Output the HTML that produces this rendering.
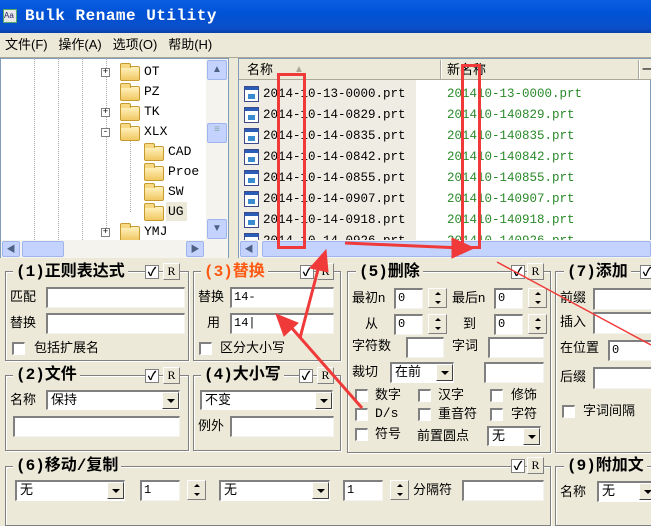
<!DOCTYPE html>
<html><head><meta charset="utf-8"><style>
*{box-sizing:border-box;margin:0;padding:0}
body{width:651px;height:512px;overflow:hidden;background:#ece9d8;position:relative;font-family:"Liberation Sans","Noto Sans CJK SC",sans-serif;font-size:13px;color:#000}
.a{position:absolute}
.t{position:absolute;white-space:nowrap;line-height:16px}
.in{position:absolute;background:#fff;border-top:2px solid #808080;border-left:2px solid #808080;border-right:1px solid #f4f3ee;border-bottom:1px solid #f4f3ee;font-family:"Liberation Mono",monospace;font-size:12px;line-height:16px;padding-left:2px}
.cb{position:absolute;width:13px;height:13px;background:#fff;border-top:2px solid #808080;border-left:2px solid #808080;border-right:1px solid #fff;border-bottom:1px solid #fff}
.ck{position:absolute;width:14px;height:14px;background:#fff;border:1px solid #808080;font-size:12px;line-height:12px;text-align:center;font-weight:bold}
.R{position:absolute;width:17px;height:17px;background:#ece9d8;border:1px solid #fff;border-right-color:#808080;border-bottom-color:#808080;font-family:"Liberation Serif",serif;font-size:12px;text-align:center;line-height:15px}
.gb{position:absolute;border:1px solid #808080;box-shadow:1px 1px 0 #fff inset,1px 1px 0 #fff}
.gt{position:absolute;background:#ece9d8;font-weight:bold;font-size:16px;line-height:18px;padding:0 3px;white-space:nowrap;font-family:"Liberation Mono","Noto Sans CJK SC",sans-serif}
.dd{position:absolute;background:#fff;border-top:2px solid #808080;border-left:2px solid #808080;border-right:1px solid #fff;border-bottom:1px solid #fff;padding-left:3px;line-height:16px}
.dd b{position:absolute;right:0;top:0;width:17px;height:17px;background:#ece9d8;border:1px solid #fff;border-right-color:#404040;border-bottom-color:#404040}
.dd b:after{content:"";position:absolute;left:4px;top:6px;border-left:4px solid transparent;border-right:4px solid transparent;border-top:4px solid #000}
.sp{position:absolute;width:19px;height:20px;background:#ece9d8;border:1px solid #fff;border-right-color:#808080;border-bottom-color:#808080}
.sp:before{content:"";position:absolute;left:6px;top:3px;border-left:3px solid transparent;border-right:3px solid transparent;border-bottom:3px solid #000}
.sp:after{content:"";position:absolute;left:6px;top:12px;border-left:3px solid transparent;border-right:3px solid transparent;border-top:3px solid #000}
.sb{position:absolute;background:#c3d3fd;border:1px solid #a0b4ee;border-radius:2px}
.fo{position:absolute;width:20px;height:15px;background:linear-gradient(#fff2c0,#f2c862);border:1px solid #c59a2e;border-radius:2px}
.fo:before{content:"";position:absolute;left:-1px;top:-4px;width:9px;height:4px;background:#f7d883;border:1px solid #c59a2e;border-bottom:none;border-radius:2px 2px 0 0}
.pl{position:absolute;width:9px;height:9px;border:1px solid #808080;background:#fff;font-size:9px;line-height:7px;text-align:center;font-family:"Liberation Mono",monospace}
.mono{font-family:"Liberation Mono",monospace;font-size:13px}
.lst{font-family:"Liberation Mono",monospace;font-size:12.5px;white-space:nowrap}
.ic{position:absolute;width:15px;height:16px;background:#fff;border:1px solid #3a4a8a}
.ic:before{content:"";position:absolute;left:0;top:0;width:13px;height:3px;background:#2a5db8}
.ic:after{content:"";position:absolute;left:3px;top:7px;width:7px;height:5px;background:#3a8ad0}
</style></head><body>
<div class="a" style="left:0;top:0;width:651px;height:33px;background:linear-gradient(#0a5fe0,#0052d6 40%,#0b4fc9 85%,#0a3fa8)"></div>
<div class="a" style="left:3px;top:9px;width:14px;height:14px;background:#e8e8e8;border:1px solid #5a6;font-size:8px;line-height:12px;color:#226">Aa</div>
<div class="t" style="left:25px;top:8px;color:#fff;font-weight:bold;font-size:16px;font-family:'Liberation Mono',monospace;letter-spacing:0.5px">Bulk Rename Utility</div>
<div class="t" style="left:5px;top:37px;font-size:13px">文件(F)&nbsp;&nbsp;&nbsp;操作(A)&nbsp;&nbsp;&nbsp;选项(O)&nbsp;&nbsp;&nbsp;帮助(H)</div>
<div class="a" style="left:0;top:57px;width:651px;height:1px;background:#aca899"></div>
<div class="a" style="left:0;top:58px;width:229px;height:200px;background:#fff;border:1px solid #7f9db9"></div>
<div class="a" style="left:34px;top:58px;height:182px;border-left:1px dotted #aaa"></div>
<div class="a" style="left:58px;top:58px;height:182px;border-left:1px dotted #aaa"></div>
<div class="a" style="left:82px;top:58px;height:182px;border-left:1px dotted #aaa"></div>
<div class="a" style="left:106px;top:58px;height:174px;border-left:1px dotted #aaa"></div>
<div class="a" style="left:130px;top:140px;height:72px;border-left:1px dotted #aaa"></div>
<div class="pl" style="left:101px;top:68px">+</div><div class="fo" style="left:120px;top:66px"></div><div class="t mono" style="left:144px;top:64px">OT</div>
<div class="fo" style="left:120px;top:86px"></div><div class="t mono" style="left:144px;top:84px">PZ</div>
<div class="pl" style="left:101px;top:108px">+</div><div class="fo" style="left:120px;top:106px"></div><div class="t mono" style="left:144px;top:104px">TK</div>
<div class="pl" style="left:101px;top:128px">-</div><div class="fo" style="left:120px;top:126px"></div><div class="t mono" style="left:144px;top:124px">XLX</div>
<div class="fo" style="left:144px;top:146px"></div><div class="t mono" style="left:168px;top:144px">CAD</div>
<div class="fo" style="left:144px;top:166px"></div><div class="t mono" style="left:168px;top:164px">Proe</div>
<div class="fo" style="left:144px;top:186px"></div><div class="t mono" style="left:168px;top:184px">SW</div>
<div class="a" style="left:166px;top:202px;width:21px;height:19px;background:#ece9d8"></div>
<div class="fo" style="left:144px;top:206px"></div><div class="t mono" style="left:168px;top:204px">UG</div>
<div class="pl" style="left:101px;top:228px">+</div><div class="fo" style="left:120px;top:226px"></div><div class="t mono" style="left:144px;top:224px">YMJ</div>
<div class="a" style="left:206px;top:59px;width:22px;height:181px;background:#f4f3ee"></div>
<div class="sb" style="left:207px;top:60px;width:20px;height:20px;text-align:center;font-size:10px;line-height:18px;color:#4d6185">▲</div>
<div class="sb" style="left:207px;top:123px;width:20px;height:20px;text-align:center;font-size:10px;color:#8aa">≡</div>
<div class="sb" style="left:207px;top:219px;width:20px;height:20px;text-align:center;font-size:10px;line-height:18px;color:#4d6185">▼</div>
<div class="a" style="left:1px;top:240px;width:227px;height:18px;background:#f4f3ee"></div>
<div class="sb" style="left:2px;top:241px;width:18px;height:16px;font-size:9px;line-height:14px;text-align:center;color:#4d6185">◀</div>
<div class="sb" style="left:22px;top:241px;width:42px;height:16px"></div>
<div class="sb" style="left:186px;top:241px;width:18px;height:16px;font-size:9px;line-height:14px;text-align:center;color:#4d6185">▶</div>
<div class="a" style="left:238px;top:58px;width:413px;height:200px;background:#fff;border:1px solid #7f9db9;overflow:hidden">
<div class="a" style="left:0;top:21px;width:177px;height:180px;background:#efede3"></div>
<div class="a lst" style="left:5px;top:25px;line-height:21px;width:200px">
<div style="position:relative;height:21px"><span class="ic" style="left:0;top:2px"></span><span style="position:absolute;left:19px">2014-10-13-0000.prt</span></div>
<div style="position:relative;height:21px"><span class="ic" style="left:0;top:2px"></span><span style="position:absolute;left:19px">2014-10-14-0829.prt</span></div>
<div style="position:relative;height:21px"><span class="ic" style="left:0;top:2px"></span><span style="position:absolute;left:19px">2014-10-14-0835.prt</span></div>
<div style="position:relative;height:21px"><span class="ic" style="left:0;top:2px"></span><span style="position:absolute;left:19px">2014-10-14-0842.prt</span></div>
<div style="position:relative;height:21px"><span class="ic" style="left:0;top:2px"></span><span style="position:absolute;left:19px">2014-10-14-0855.prt</span></div>
<div style="position:relative;height:21px"><span class="ic" style="left:0;top:2px"></span><span style="position:absolute;left:19px">2014-10-14-0907.prt</span></div>
<div style="position:relative;height:21px"><span class="ic" style="left:0;top:2px"></span><span style="position:absolute;left:19px">2014-10-14-0918.prt</span></div>
<div style="position:relative;height:21px"><span class="ic" style="left:0;top:2px"></span><span style="position:absolute;left:19px">2014-10-14-0926.prt</span></div>
</div>
<div class="a lst" style="left:208px;top:25px;line-height:21px;color:#2a8a2a;width:200px">
<div>201410-13-0000.prt</div><div>201410-140829.prt</div><div>201410-140835.prt</div><div>201410-140842.prt</div><div>201410-140855.prt</div><div>201410-140907.prt</div><div>201410-140918.prt</div><div>201410-140926.prt</div>
</div>
</div>
<div class="a" style="left:239px;top:59px;width:412px;height:21px;background:#ece9d8;border-bottom:1px solid #aca899"></div>
<div class="a" style="left:440px;top:60px;width:2px;height:19px;border-left:1px solid #aca899;border-right:1px solid #fff"></div>
<div class="a" style="left:638px;top:60px;width:2px;height:19px;border-left:1px solid #aca899;border-right:1px solid #fff"></div>
<div class="t" style="left:247px;top:62px">名称</div>
<div class="t" style="left:294px;top:62px;color:#aca899;font-size:10px">▲</div>
<div class="t" style="left:447px;top:62px">新名称</div>
<div class="t" style="left:642px;top:62px">一</div>
<div class="a" style="left:239px;top:240px;width:412px;height:18px;background:#f4f3ee"></div>
<div class="sb" style="left:240px;top:241px;width:18px;height:16px;font-size:9px;line-height:14px;text-align:center;color:#4d6185">◀</div>
<div class="sb" style="left:262px;top:241px;width:389px;height:16px"></div>
<div class="a" style="left:229px;top:58px;width:9px;height:200px;background:#ece9d8"></div>

<div class="gb" style="left:5px;top:271px;width:184px;height:90px"></div>
<div class="gt" style="left:13px;top:263px">(1)正则表达式</div>
<div class="ck" style="left:145px;top:265px">✓</div><div class="R" style="left:163px;top:263px">R</div>
<div class="t" style="left:10px;top:289px">匹配</div><div class="in" style="left:46px;top:287px;width:139px;height:21px"></div>
<div class="t" style="left:10px;top:315px">替换</div><div class="in" style="left:46px;top:313px;width:139px;height:21px"></div>
<div class="cb" style="left:12px;top:342px"></div><div class="t" style="left:34px;top:340px">包括扩展名</div>

<div class="gb" style="left:193px;top:271px;width:148px;height:90px"></div>
<div class="gt" style="left:201px;top:263px;color:#ff5a14">(3)替换</div>
<div class="ck" style="left:300px;top:265px">✓</div><div class="R" style="left:317px;top:263px">R</div>
<div class="t" style="left:198px;top:289px">替换</div><div class="in" style="left:230px;top:287px;width:104px;height:21px">14-</div>
<div class="t" style="left:207px;top:315px">用</div><div class="in" style="left:230px;top:313px;width:104px;height:21px">14|</div>
<div class="cb" style="left:199px;top:342px"></div><div class="t" style="left:220px;top:340px">区分大小写</div>

<div class="gb" style="left:5px;top:375px;width:184px;height:76px"></div>
<div class="gt" style="left:13px;top:366px">(2)文件</div>
<div class="a" style="left:88px;top:375px;width:55px;height:1px;background:#808080"></div>
<div class="ck" style="left:145px;top:369px">✓</div><div class="R" style="left:163px;top:367px">R</div>
<div class="t" style="left:10px;top:392px">名称</div><div class="dd" style="left:46px;top:390px;width:134px;height:20px">保持<b></b></div>
<div class="in" style="left:13px;top:416px;width:167px;height:21px"></div>

<div class="gb" style="left:193px;top:375px;width:148px;height:76px"></div>
<div class="gt" style="left:201px;top:366px">(4)大小写</div>
<div class="ck" style="left:299px;top:369px">✓</div><div class="R" style="left:317px;top:367px">R</div>
<div class="dd" style="left:200px;top:390px;width:133px;height:20px">不变<b></b></div>
<div class="t" style="left:198px;top:418px">例外</div><div class="in" style="left:230px;top:416px;width:104px;height:21px"></div>

<div class="gb" style="left:347px;top:271px;width:204px;height:182px"></div>
<div class="gt" style="left:356px;top:263px">(5)删除</div>
<div class="ck" style="left:511px;top:265px">✓</div><div class="R" style="left:527px;top:263px">R</div>
<div class="t" style="left:352px;top:290px">最初n</div><div class="in" style="left:394px;top:288px;width:29px;height:21px">0</div><div class="sp" style="left:428px;top:288px"></div>
<div class="t" style="left:452px;top:290px">最后n</div><div class="in" style="left:494px;top:288px;width:29px;height:21px">0</div><div class="sp" style="left:528px;top:288px"></div>
<div class="t" style="left:365px;top:316px">从</div><div class="in" style="left:394px;top:314px;width:29px;height:21px">0</div><div class="sp" style="left:428px;top:314px"></div>
<div class="t" style="left:463px;top:316px">到</div><div class="in" style="left:494px;top:314px;width:29px;height:21px">0</div><div class="sp" style="left:528px;top:314px"></div>
<div class="t" style="left:352px;top:338px">字符数</div><div class="in" style="left:406px;top:337px;width:38px;height:21px"></div>
<div class="t" style="left:452px;top:338px">字词</div><div class="in" style="left:488px;top:337px;width:56px;height:21px"></div>
<div class="t" style="left:352px;top:364px">裁切</div><div class="dd" style="left:390px;top:362px;width:64px;height:21px">在前<b></b></div>
<div class="in" style="left:484px;top:362px;width:60px;height:21px"></div>
<div class="cb" style="left:355px;top:389px"></div><div class="t" style="left:375px;top:387px">数字</div>
<div class="cb" style="left:418px;top:389px"></div><div class="t" style="left:438px;top:387px">汉字</div>
<div class="cb" style="left:490px;top:389px"></div><div class="t" style="left:511px;top:387px">修饰</div>
<div class="cb" style="left:355px;top:408px"></div><div class="t mono" style="left:375px;top:406px">D/s</div>
<div class="cb" style="left:418px;top:408px"></div><div class="t" style="left:438px;top:406px">重音符</div>
<div class="cb" style="left:490px;top:408px"></div><div class="t" style="left:511px;top:406px">字符</div>
<div class="cb" style="left:355px;top:428px"></div><div class="t" style="left:375px;top:426px">符号</div>
<div class="t" style="left:417px;top:428px">前置圆点</div><div class="dd" style="left:487px;top:426px;width:54px;height:20px">无<b></b></div>

<div class="gb" style="left:555px;top:271px;width:100px;height:182px"></div>
<div class="gt" style="left:564px;top:263px">(7)添加</div>
<div class="ck" style="left:640px;top:265px">✓</div>
<div class="t" style="left:560px;top:290px">前缀</div><div class="in" style="left:593px;top:288px;width:62px;height:22px"></div>
<div class="t" style="left:560px;top:314px">插入</div><div class="in" style="left:593px;top:312px;width:62px;height:22px"></div>
<div class="t" style="left:560px;top:340px">在位置</div><div class="in" style="left:608px;top:340px;width:47px;height:21px">0</div>
<div class="t" style="left:560px;top:369px">后缀</div><div class="in" style="left:593px;top:367px;width:62px;height:22px"></div>
<div class="cb" style="left:562px;top:405px"></div><div class="t" style="left:583px;top:403px">字词间隔</div>

<div class="gb" style="left:5px;top:466px;width:546px;height:60px"></div>
<div class="gt" style="left:13px;top:457px">(6)移动/复制</div>
<div class="ck" style="left:511px;top:459px">✓</div><div class="R" style="left:527px;top:457px">R</div>
<div class="dd" style="left:15px;top:480px;width:110px;height:21px">无<b></b></div>
<div class="in" style="left:140px;top:480px;width:40px;height:21px">1</div><div class="sp" style="left:187px;top:480px"></div>
<div class="dd" style="left:219px;top:480px;width:111px;height:21px">无<b></b></div>
<div class="in" style="left:343px;top:480px;width:40px;height:21px">1</div><div class="sp" style="left:390px;top:480px"></div>
<div class="t" style="left:413px;top:482px">分隔符</div><div class="in" style="left:462px;top:480px;width:82px;height:21px"></div>

<div class="gb" style="left:555px;top:466px;width:100px;height:60px"></div>
<div class="gt" style="left:564px;top:457px">(9)附加文</div>
<div class="t" style="left:560px;top:484px">名称</div><div class="dd" style="left:597px;top:481px;width:60px;height:21px">无<b></b></div>

<div class="a" style="left:277px;top:73px;width:29px;height:176px;border:3px solid #f03a3a"></div>
<div class="a" style="left:461px;top:64px;width:20px;height:185px;border:3px solid #f03a3a"></div>
<svg class="a" style="left:0;top:0" width="651" height="512">
<g stroke="#f03a3a" fill="#f03a3a">
<line x1="300" y1="338" x2="320" y2="262" stroke-width="3"/><polygon points="326,250 310,268 328,272"/>
<line x1="362" y1="408" x2="290" y2="326" stroke-width="3"/><polygon points="276,314 284,336 298,323"/>
<line x1="345" y1="243" x2="462" y2="248" stroke-width="3"/><polygon points="474,248 452,238 452,258"/>
<line x1="497" y1="262" x2="651" y2="345" stroke-width="1.5"/>
</g></svg>
</body></html>
